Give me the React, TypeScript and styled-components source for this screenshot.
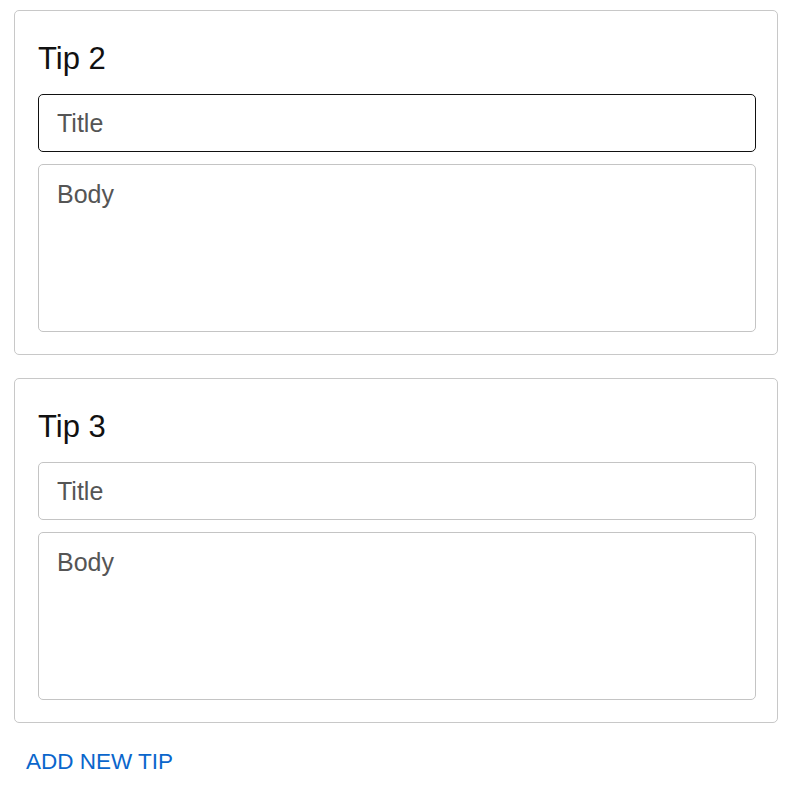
import React from "react";
import styled, { createGlobalStyle } from "styled-components";

const Global = createGlobalStyle`
  html, body { margin: 0; padding: 0; background: #fff; }
  body { font-family: "Liberation Sans", Arial, Helvetica, sans-serif; }
  * { box-sizing: border-box; }
`;

const Page = styled.div`
  display: flex;
  flex-direction: column;
  gap: 23px;
  padding: 10px 22px 0 14px;
`;

const Card = styled.section`
  display: flex;
  flex-direction: column;
  border: 1px solid #c8c8c8;
  border-radius: 5px;
  padding: 31px 21px 22px 23px;
`;

const Heading = styled.h2`
  margin: 0 0 18px;
  font-size: 31px;
  line-height: 34px;
  font-weight: 400;
  color: #111;
`;

const Fields = styled.div`
  display: flex;
  flex-direction: column;
  gap: 12px;
`;

const TitleInput = styled.input<{ $focused?: boolean }>`
  height: 58px;
  width: 100%;
  padding: 0 18px;
  border: 1px solid ${(p) => (p.$focused ? "#111" : "#c4c4c4")};
  border-radius: 5px;
  font-family: inherit;
  font-size: 25px;
  color: #222;
  outline: none;
  &::placeholder { color: #555; }
`;

const BodyInput = styled.textarea`
  height: 168px;
  width: 100%;
  padding: 15px 18px;
  border: 1px solid #c4c4c4;
  border-radius: 5px;
  font-family: inherit;
  font-size: 25px;
  color: #222;
  resize: none;
  outline: none;
  &::placeholder { color: #555; }
`;

const AddButton = styled.button`
  align-self: flex-start;
  margin: 3px 0 0 12px;
  padding: 0;
  border: none;
  background: none;
  font-family: inherit;
  font-size: 22.5px;
  color: #0a66cc;
  cursor: pointer;
`;

const tips = [
  { n: 2, focused: true },
  { n: 3, focused: false },
];

export default function App() {
  return (
    <>
      <Global />
      <Page>
        {tips.map((t) => (
          <Card key={t.n}>
            <Heading>Tip {t.n}</Heading>
            <Fields>
              <TitleInput placeholder="Title" $focused={t.focused} />
              <BodyInput placeholder="Body" />
            </Fields>
          </Card>
        ))}
        <AddButton>ADD NEW TIP</AddButton>
      </Page>
    </>
  );
}
